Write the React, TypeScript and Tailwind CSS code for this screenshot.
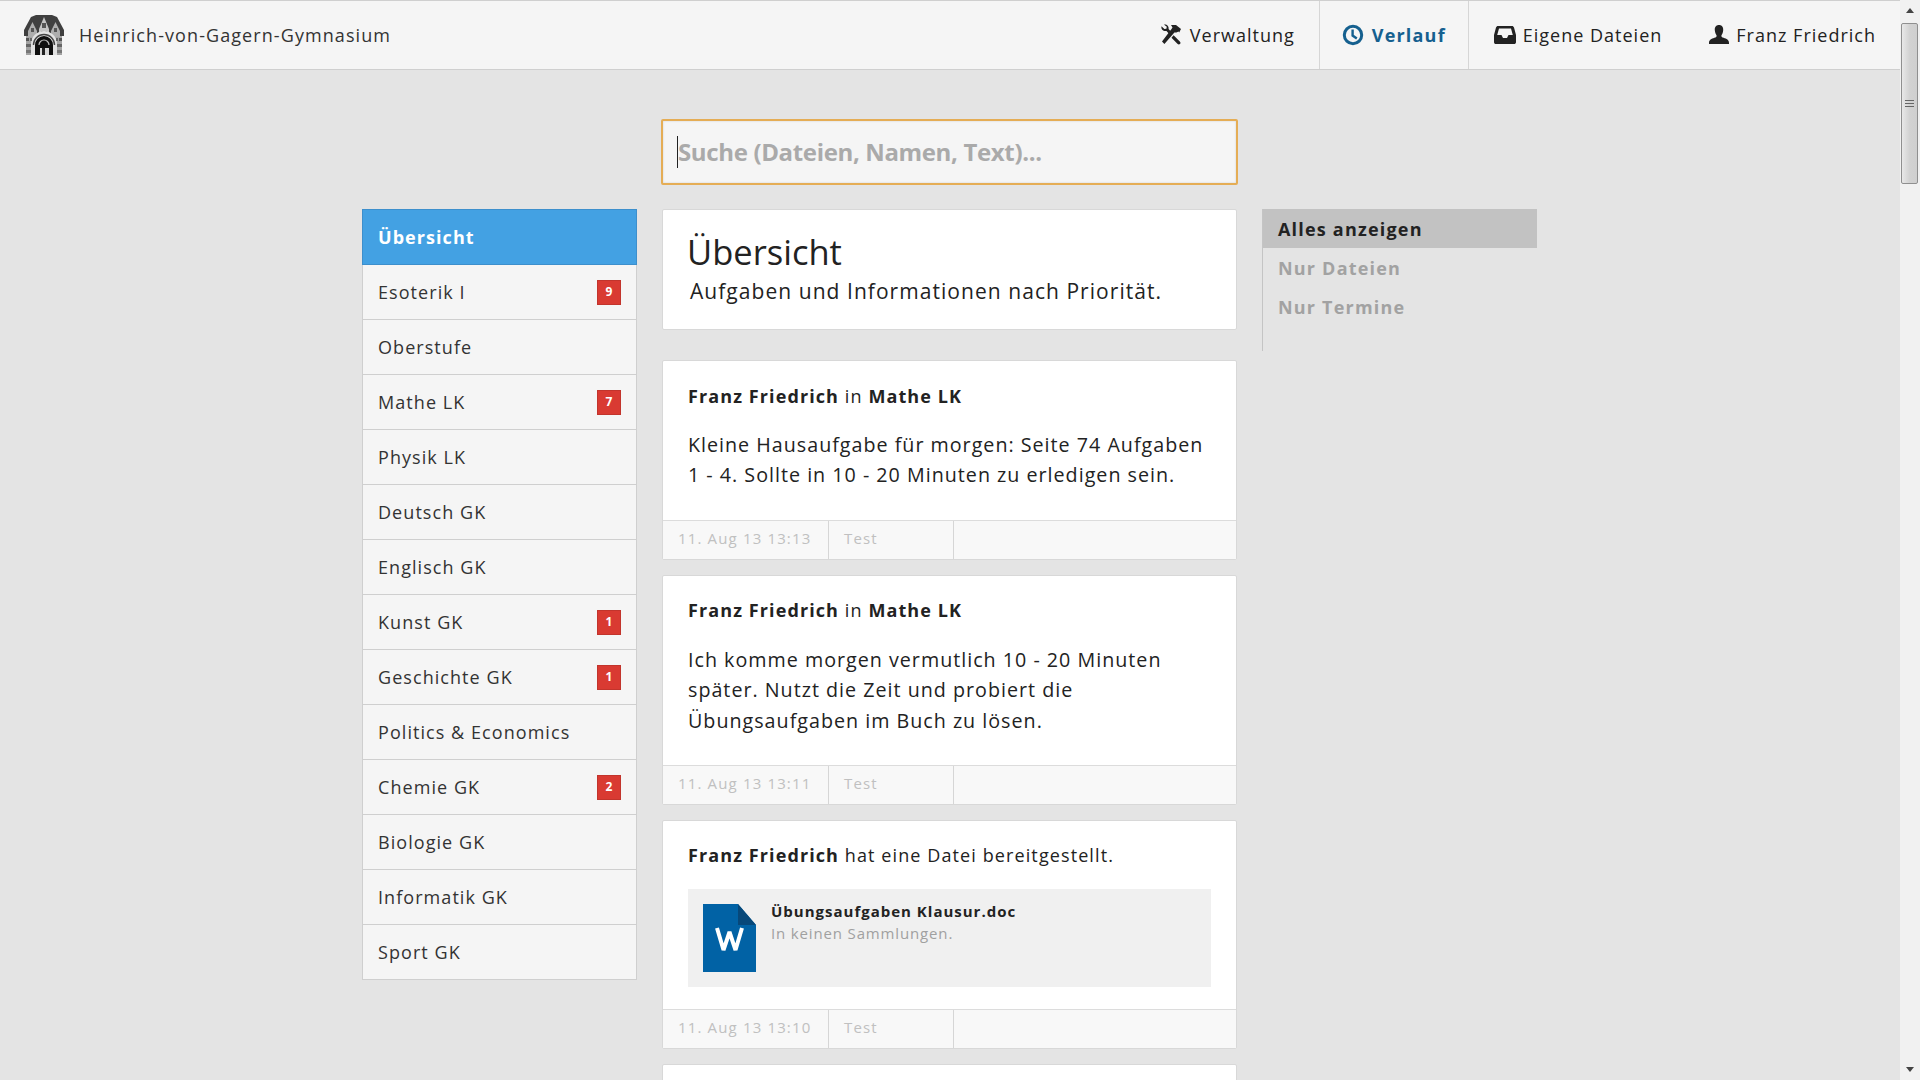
const courses: [string, number?][] = [
  ["Esoterik I", 9],
  ["Oberstufe"],
  ["Mathe LK", 7],
  ["Physik LK"],
  ["Deutsch GK"],
  ["Englisch GK"],
  ["Kunst GK", 1],
  ["Geschichte GK", 1],
  ["Politics & Economics"],
  ["Chemie GK", 2],
  ["Biologie GK"],
  ["Informatik GK"],
  ["Sport GK"],
];

function Logo() {
  return (
    <svg width="40" height="40" viewBox="0 0 40 40" className="shrink-0">
      <rect x="2" y="14" width="36" height="26" fill="#a2a2a2" />
      <path d="M0 15 L7 2 L12 0 H28 L33 2 L40 15 V21 H0 Z" fill="#3f3f3f" />
      <path d="M15 14 L20 2 L25 14 V20 H15 Z" fill="#c4c4c4" />
      <path d="M4 16 L8.5 7 L13 16 V22 H4 Z M27 16 L31.5 7 L36 16 V22 H27 Z" fill="#adadad" />
      <rect x="18" y="8" width="4" height="5" fill="#555" />
      <rect x="7" y="13" width="3" height="4" fill="#555" />
      <rect x="30" y="13" width="3" height="4" fill="#555" />
      <rect x="17" y="16" width="6" height="3" fill="#666" />
      <path d="M7 40 V29 A13 13 0 0 1 33 29 V40 H28 V31 A8 8 0 0 0 12 31 V40 Z" fill="#e2e2e2" />
      <path d="M11 40 V30 A9 9 0 0 1 29 30 V40 H25 V33 H16 V40 Z" fill="#0f0f0f" />
      <path d="M9.5 30 A10.5 10.5 0 0 1 30.5 30" fill="none" stroke="#444" strokeWidth="1.4" />
      <path d="M15 30 A5 5 0 0 1 25 30" fill="none" stroke="#bbb" strokeWidth="1.2" />
      <rect x="16" y="33" width="9" height="7" fill="#d8d8d8" />
      <rect x="18" y="33" width="3" height="7" fill="#222" />
      <rect x="2" y="23" width="3" height="3" fill="#555" />
      <rect x="6" y="23" width="2" height="3" fill="#666" />
      <rect x="32" y="23" width="2" height="3" fill="#666" />
      <rect x="35" y="23" width="3" height="3" fill="#555" />
      <rect x="2" y="29" width="5" height="3" fill="#666" />
      <rect x="33" y="29" width="5" height="3" fill="#666" />
      <rect x="2" y="35" width="5" height="3" fill="#777" />
      <rect x="33" y="35" width="5" height="3" fill="#777" />
    </svg>
  );
}

function ToolsIcon() {
  return (
    <svg width="22" height="22" viewBox="0 0 22 22" fill="#222" className="-scale-x-100">
      <path d="M1 5 L6 1 H11 L9.5 3.5 L10.5 5 L20 17.5 L17.6 20 L7.6 8.4 L5.6 8.6 L3.5 7.6 L2.8 8.6 Z" />
      <path d="M20.5 2.2 L17.6 5.1 L15.6 4.7 L15.2 2.7 L18.1 0.6 C15.4 0 13 2 13.4 4.9 L11.4 7.2 L13.3 9.4 L15.5 7 C18.6 7.6 21.2 5.2 20.5 2.2 Z" />
      <path d="M8.4 11.2 L2.2 17.4 C1.2 18.4 1.4 19.4 2 20 C2.7 20.6 3.6 20.8 4.6 19.8 L10.5 13.8 Z" />
    </svg>
  );
}

function ClockIcon() {
  return (
    <svg width="22" height="22" viewBox="0 0 22 22" fill="none" stroke="#15608f" strokeWidth="3">
      <circle cx="11" cy="11" r="8.7" />
      <path d="M10.6 5.4 V11.6 L14.8 14.6" strokeWidth="2.4" />
    </svg>
  );
}

function InboxIcon() {
  return (
    <svg width="22" height="22" viewBox="0 0 22 22" fill="#222">
      <path fillRule="evenodd" d="M4 2 H18 C19 2 19.6 2.6 20 3.6 L22 11 V18 C22 19.4 21.2 20 20 20 H2 C0.8 20 0 19.4 0 18 V11 L2 3.6 C2.4 2.6 3 2 4 2 Z M5 4.4 L3.2 11 H7.5 L9 14 H13 L14.5 11 H18.8 L17 4.4 Z" />
    </svg>
  );
}

function UserIcon() {
  return (
    <svg width="22" height="22" viewBox="0 0 22 22" fill="#222">
      <path d="M11 1 C14 1 15.4 3.2 15.2 6.2 C15 8.8 14 10.4 13.4 11.4 C13.2 12.6 14 13.2 15.6 13.8 C18.6 14.8 21 15.8 21 19 V20 H1 V19 C1 15.8 3.4 14.8 6.4 13.8 C8 13.2 8.8 12.6 8.6 11.4 C8 10.4 7 8.8 6.8 6.2 C6.6 3.2 8 1 11 1 Z" />
    </svg>
  );
}

function WordIcon() {
  return (
    <svg width="53" height="68" viewBox="0 0 53 68" className="shrink-0">
      <path d="M0 0 H35 L53 21 V68 H0 Z" fill="#0162a5" />
      <path d="M35 0 L53 21 H35 Z" fill="#07487a" />
      <path d="M14 24 L20.5 46 L26.5 28 L32.5 46 L39 24" fill="none" stroke="#fff" strokeWidth="4" strokeLinejoin="bevel" />
    </svg>
  );
}

function Footer({ date }: { date: string }) {
  return (
    <div className="flex h-[39px] border-t border-[#dcdcdc] bg-[#f8f8f8] text-[15px] leading-[34px] tracking-[1.15px] text-[#c0c0c0]">
      <div className="w-[166px] border-r border-[#d6d6d6] pl-[15px]">{date}</div>
      <div className="w-[125px] border-r border-[#d6d6d6] pl-[15px]">Test</div>
    </div>
  );
}

function Card({ children, date, h }: { children: React.ReactNode; date: string; h: string }) {
  return (
    <div className={`flex flex-col rounded-[2px] border border-[#d8d8d8] bg-white ${h}`}>
      <div className="flex-1 px-[25px]">{children}</div>
      <Footer date={date} />
    </div>
  );
}

function Scrollbar() {
  return (
    <div className="flex h-full w-[20px] shrink-0 flex-col items-center bg-[#f1f1f1]">
      <svg width="12" height="23" viewBox="0 0 12 23" className="shrink-0">
        <path d="M2 13 L6 8 L10 13 Z" fill="#444" />
      </svg>
      <div className="mr-px flex h-[161px] w-[17px] flex-col items-center justify-center gap-[2px] rounded-[2px] border border-[#8f8f8f] bg-gradient-to-r from-[#e8e8e8] via-[#d2d2d2] to-[#cfcfcf]">
        <div className="h-px w-[9px] bg-[#666]" />
        <div className="h-px w-[9px] bg-[#666]" />
        <div className="h-px w-[9px] bg-[#666]" />
      </div>
      <div className="flex-1" />
      <svg width="12" height="20" viewBox="0 0 12 20" className="shrink-0">
        <path d="M2 7 L6 12 L10 7 Z" fill="#444" />
      </svg>
    </div>
  );
}

export default function App() {
  return (
    <div
      className="flex h-screen w-full overflow-hidden bg-[#e4e4e4] text-[18px] tracking-[1px] text-[#222]"
      style={{ fontFamily: '"Open Sans", "Liberation Sans", sans-serif' }}
    >
      <div className="min-w-0 flex-1">
        <header className="flex h-[70px] items-stretch border-y border-[#cfcfcf] bg-[#f5f5f5]">
          <div className="flex flex-1 items-center pl-[24px]">
            <Logo />
            <span className="ml-[15px] tracking-[1.08px] text-[#333]">Heinrich-von-Gagern-Gymnasium</span>
          </div>
          <nav className="flex items-stretch pr-[24px]">
            <div className="flex items-center gap-[8px] pr-[24px]">
              <ToolsIcon />
              <span>Verwaltung</span>
            </div>
            <div className="flex w-[150px] items-center justify-center gap-[8px] border-x border-[#d6d6d6] font-bold tracking-[1.2px] text-[#15608f]">
              <ClockIcon />
              <span>Verlauf</span>
            </div>
            <div className="flex items-center gap-[7px] pl-[25px] pr-[46px]">
              <InboxIcon />
              <span>Eigene Dateien</span>
            </div>
            <div className="flex items-center gap-[6px]">
              <UserIcon />
              <span>Franz Friedrich</span>
            </div>
          </nav>
        </header>

        <div className="ml-[661px] mt-[49px] w-[577px]">
          <div className="flex h-[66px] items-center rounded-[2px] border-2 border-[#e5ad55] bg-[#f5f5f5] pl-[14px] shadow-[inset_0_0_2px_#ccc]">
            <div className="h-[32px] w-px bg-[#222]" />
            <span className="text-[24px] font-bold tracking-[-0.35px] text-[#aaaaaa]">Suche (Dateien, Namen, Text)...</span>
          </div>
        </div>

        <div className="ml-[362px] mt-[24px] flex items-start">
          <aside className="w-[275px] border-x border-b border-[#cfcfcf] bg-[#f5f5f5] tracking-[1.06px]">
            <div className="-mx-px flex h-[56px] items-center border border-[#3d8fcc] bg-[#43a1e3] pl-[15px] font-bold text-white">
              Übersicht
            </div>
            {courses.map(([name, badge]) => (
              <div key={name} className="flex h-[55px] items-center justify-between border-b border-[#cfcfcf] pl-[15px] pr-[15px] text-[#333] last:h-[54px] last:border-b-0">
                <span>{name}</span>
                {badge ? (
                  <span className="flex h-[25px] w-[24px] items-center justify-center border border-[#c2342c] bg-[#d93a32] text-[12px] font-bold tracking-normal text-white">
                    {badge}
                  </span>
                ) : null}
              </div>
            ))}
          </aside>

          <main className="ml-[25px] flex w-[575px] flex-col">
            <div className="h-[121px] rounded-[2px] border border-[#d8d8d8] bg-white pl-[24px] pt-[19px]">
              <h1 className="text-[34.5px] font-normal leading-[46px] tracking-normal text-[#222]">Übersicht</h1>
              <p className="ml-[3px] mt-[2px] text-[21px] leading-[28px] tracking-[1.05px]">Aufgaben und Informationen nach Priorität.</p>
            </div>

            <div className="mt-[30px] flex flex-col gap-[15px]">
              <Card h="h-[200px]" date="11. Aug 13 13:13">
                <p className="mt-[20px] leading-[30px] tracking-[1.1px]"><b className="font-bold">Franz Friedrich</b> in <b className="font-bold">Mathe LK</b></p>
                <p className="mt-[19px] text-[19.7px] leading-[30.3px]">Kleine Hausaufgabe für morgen: Seite 74 Aufgaben 1 - 4. Sollte in 10 - 20 Minuten zu erledigen sein.</p>
              </Card>
              <Card h="h-[230px]" date="11. Aug 13 13:11">
                <p className="mt-[19px] leading-[30px] tracking-[1.1px]"><b className="font-bold">Franz Friedrich</b> in <b className="font-bold">Mathe LK</b></p>
                <p className="mt-[20px] text-[19.7px] leading-[30.3px]">Ich komme morgen vermutlich 10 - 20 Minuten später. Nutzt die Zeit und probiert die Übungsaufgaben im Buch zu lösen.</p>
              </Card>
              <Card h="h-[229px]" date="11. Aug 13 13:10">
                <p className="mt-[19px] leading-[30px] tracking-[1.1px]"><b className="font-bold">Franz Friedrich</b> hat eine Datei bereitgestellt.</p>
                <div className="mt-[19px] flex h-[98px] items-start gap-[15px] bg-[#f0f0f0] pl-[15px] pt-[15px]">
                  <WordIcon />
                  <div className="-mt-[4px] text-[15px] leading-[22px]">
                    <div className="font-bold text-[#222]">Übungsaufgaben Klausur.doc</div>
                    <div className="tracking-[0.85px] text-[#a0a0a0]">In keinen Sammlungen.</div>
                  </div>
                </div>
              </Card>
              <div className="h-[60px] rounded-[2px] border border-[#d8d8d8] bg-white" />
            </div>
          </main>

          <aside className="ml-[25px] h-[142px] w-[275px] border-l border-[#c4c4c4] tracking-[1.2px] text-[#a2a2a2]">
            <div className="flex h-[39px] items-center bg-[#c2c2c2] pl-[15px] pt-[1px] font-bold text-[#222]">Alles anzeigen</div>
            <div className="flex h-[39px] items-center pl-[15px] pt-[1px] font-bold">Nur Dateien</div>
            <div className="flex h-[39px] items-center pl-[15px] pt-[1px] font-bold">Nur Termine</div>
          </aside>
        </div>
      </div>
      <Scrollbar />
    </div>
  );
}
